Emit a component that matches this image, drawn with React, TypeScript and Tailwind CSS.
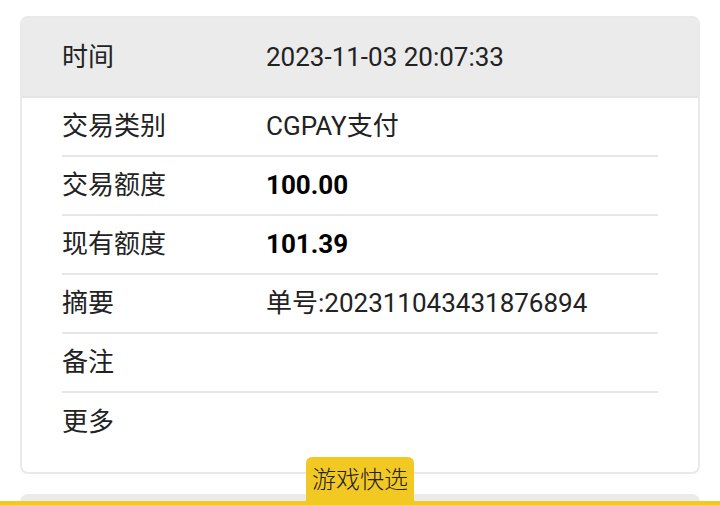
const rows: { label: string; value: string; bold?: boolean }[] = [
  { label: "交易类别", value: "CGPAY支付" },
  { label: "交易额度", value: "100.00", bold: true },
  { label: "现有额度", value: "101.39", bold: true },
  { label: "摘要", value: "单号:202311043431876894" },
  { label: "备注", value: "" },
  { label: "更多", value: "" },
];

export default function App() {
  return (
    <div
      className="relative h-[505px] w-[720px] overflow-hidden bg-white text-[26px] text-[#222]"
      style={{ fontFamily: 'Roboto, "Noto Sans CJK SC", sans-serif' }}
    >
      <div className="flex flex-col gap-[20px] px-5 pt-[16px]">
        {/* detail card */}
        <div className="overflow-hidden rounded-lg border-2 border-[#e9e9e9] bg-white">
          <div className="flex h-[80px] items-center border-b-2 border-[#e4e4e4] bg-[#ebebeb] px-[40px]">
            <span className="w-[204px]">时间</span>
            <span>2023-11-03 20:07:33</span>
          </div>
          <div className="px-[40px] pb-[20px]">
            {rows.map((r, i) => (
              <div
                key={r.label}
                className={`flex h-[59px] items-center ${i < rows.length - 1 ? "border-b-2 border-[#e6e6e6]" : ""}`}
              >
                <span className="w-[204px]">{r.label}</span>
                <span className={r.bold ? "font-bold text-black" : ""}>{r.value}</span>
              </div>
            ))}
          </div>
        </div>

        {/* next card, cut off */}
        <div className="h-[60px] rounded-lg bg-[#ebebeb]" />
      </div>

      {/* bottom bar + tab */}
      <div className="absolute bottom-0 left-0 h-[4px] w-full bg-[#f2c922]" />
      <div className="absolute bottom-0 left-[306px] flex h-[48px] w-[108px] items-center justify-center rounded-t-[6px] bg-[#f2c922] pb-[2px] text-[24px] font-light text-[#222]">
        游戏快选
      </div>
    </div>
  );
}
